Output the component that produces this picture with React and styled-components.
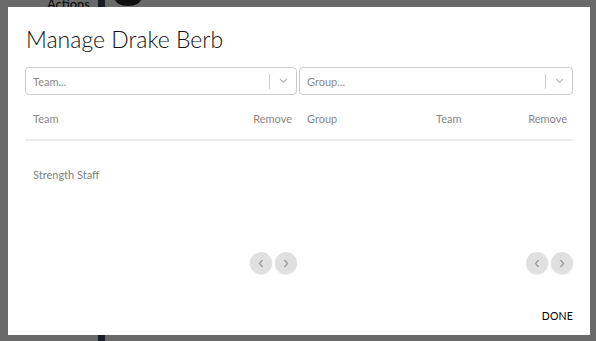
import styled, { createGlobalStyle } from "styled-components";

const GlobalStyle = createGlobalStyle`
  *, *::before, *::after {
    box-sizing: border-box;
  }
  html, body {
    margin: 0;
    padding: 0;
    width: 596px;
    height: 341px;
    overflow: hidden;
    font-family: Lato, "Liberation Sans", sans-serif;
  }
`;

const Page = styled.div`
  width: 596px;
  height: 341px;
  display: flex;
  background: #f3f3f3;
`;

const NavLabel = styled.div`
  width: 98px;
  display: flex;
  justify-content: flex-end;
  padding-right: 8px;
  font-size: 13px;
  line-height: 8px;
  color: #111;
`;

const SideBar = styled.div`
  width: 7px;
  background: #3d454e;
`;

const Avatar = styled.div`
  width: 26px;
  height: 14px;
  margin: -8px 0 0 10px;
  border-radius: 50%;
  background: #222;
`;

const Overlay = styled.div`
  position: fixed;
  inset: 0;
  background: rgba(0, 0, 0, 0.57);
  display: flex;
  padding: 7px 6px 6px 8px;
`;

const Modal = styled.div`
  flex: 1;
  background: #fff;
  display: flex;
  flex-direction: column;
  padding: 17px 17px 0 17px;
`;

const Title = styled.h2`
  margin: 0 0 0 1px;
  font-size: 23px;
  line-height: 30px;
  font-weight: 300;
  color: #111;
`;

const Columns = styled.div`
  display: grid;
  grid-template-columns: 272px 1fr;
  column-gap: 2px;
  margin-top: 13px;
`;

const Select = styled.div`
  height: 28px;
  border: 1px solid #ccc;
  border-radius: 4px;
  display: flex;
  align-items: center;
  padding-left: 7px;
  font-size: 11px;
  color: #8a8a8a;
`;

const Placeholder = styled.span`
  flex: 1;
`;

const Separator = styled.span`
  width: 1px;
  height: 15px;
  background: #ccc;
`;

const Indicator = styled.span`
  width: 26px;
  display: flex;
  justify-content: center;
  color: #bbb;
`;

const Table = styled.div`
  display: flex;
  flex-direction: column;
  margin-top: 8px;
`;

const HeaderRow = styled.div`
  display: grid;
  grid-template-columns: ${(p) => p.$cols};
  align-items: center;
  height: 38px;
  padding: 0 ${(p) => p.$right}px 5px 8px;
  border-bottom: 2px solid #ececec;
  margin-right: ${(p) => p.$gap}px;
  font-size: 11px;
  color: #888;
`;

const Cell = styled.span`
  text-align: ${(p) => p.$align || "left"};
`;

const Body = styled.div`
  height: 111px;
`;

const Row = styled.div`
  height: 66px;
  display: flex;
  align-items: center;
  padding-left: 8px;
  font-size: 11px;
  color: #808080;
`;

const Pager = styled.div`
  display: flex;
  justify-content: flex-end;
  gap: 3px;
  padding-right: ${(p) => p.$right}px;
`;

const PageButton = styled.button`
  width: 22px;
  height: 22px;
  border: none;
  border-radius: 50%;
  background: #e0e0e0;
  color: #9a9a9a;
  display: flex;
  align-items: center;
  justify-content: center;
  padding: 0;
  box-shadow: 0 1px 1px rgba(0, 0, 0, 0.08);
`;

const Footer = styled.div`
  margin-top: auto;
  display: flex;
  justify-content: flex-end;
  padding-bottom: 12px;
`;

const DoneButton = styled.button`
  border: none;
  background: none;
  padding: 0;
  font-family: Lato, "Liberation Sans", sans-serif;
  font-size: 10.5px;
  line-height: 14px;
  font-weight: 400;
  letter-spacing: 0.2px;
  color: #000;
`;

const ChevronDown = () => (
  <svg width="9" height="6" viewBox="0 0 9 6">
    <polyline points="1,1 4.5,4.5 8,1" fill="none" stroke="currentColor" strokeWidth="1.2" />
  </svg>
);

const Chevron = ({ dir }) => (
  <svg width="6" height="9" viewBox="0 0 6 9">
    <polyline
      points={dir === "left" ? "4.5,1 1.5,4.5 4.5,8" : "1.5,1 4.5,4.5 1.5,8"}
      fill="none"
      stroke="currentColor"
      strokeWidth="1.3"
    />
  </svg>
);

const Pagination = ({ right }) => (
  <Pager $right={right}>
    <PageButton><Chevron dir="left" /></PageButton>
    <PageButton><Chevron dir="right" /></PageButton>
  </Pager>
);

const SelectBox = ({ placeholder }) => (
  <Select>
    <Placeholder>{placeholder}</Placeholder>
    <Separator />
    <Indicator><ChevronDown /></Indicator>
  </Select>
);

const App = () => {
  return (
    <>
      <GlobalStyle />
      <Page>
        <NavLabel>Actions</NavLabel>
        <SideBar />
        <Avatar />
      </Page>
      <Overlay>
        <Modal>
          <Title>Manage Drake Berb</Title>
          <Columns>
            <SelectBox placeholder="Team..." />
            <SelectBox placeholder="Group..." />
            <Table>
              <HeaderRow $cols="1fr auto" $right={7} $gap={-2}>
                <Cell>Team</Cell>
                <Cell $align="right">Remove</Cell>
              </HeaderRow>
              <Body>
                <Row>Strength Staff</Row>
              </Body>
              <Pagination right={-2} />
            </Table>
            <Table>
              <HeaderRow $cols="129px 1fr auto" $right={6} $gap={0}>
                <Cell>Group</Cell>
                <Cell>Team</Cell>
                <Cell $align="right">Remove</Cell>
              </HeaderRow>
              <Body />
              <Pagination right={0} />
            </Table>
          </Columns>
          <Footer>
            <DoneButton>DONE</DoneButton>
          </Footer>
        </Modal>
      </Overlay>
    </>
  );
};

export default App;
